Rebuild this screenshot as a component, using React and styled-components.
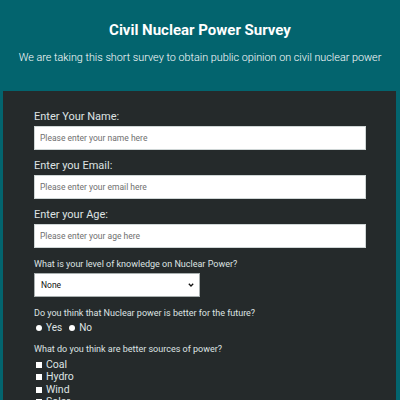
import React from 'react'
import styled, { createGlobalStyle } from 'styled-components'

const GlobalStyle = createGlobalStyle`
    body {
        margin: 0;
        background-color: #03646e;
        font-family: Roboto, "Liberation Sans", sans-serif;
    }
`

const Header = styled.header`
    text-align: center;
    color: #ffffff;
    padding: 21px 0 0 0;
    height: 70px;
`

const Title = styled.h1`
    margin: 0;
    font-size: 15px;
    font-weight: 700;
    line-height: 18px;
`

const Subtitle = styled.p`
    margin: 12px 0 0 0;
    font-size: 10.8px;
    font-weight: 300;
    line-height: 14px;
    white-space: nowrap;
`

const Panel = styled.main`
    margin: 0 4px 0 3px;
    background-color: #252a2b;
    padding: 19px 30px 0 31px;
    height: 309px;
    overflow: hidden;
`

const Field = styled.div`
    margin-bottom: ${p => p.$gap || 9}px;
`

const Label = styled.label`
    display: block;
    color: #dfe3e3;
    font-size: ${p => p.$size || 11}px;
    line-height: 14px;
    margin-bottom: ${p => p.$space || 2}px;
`

const TextInput = styled.input`
    display: block;
    width: 100%;
    height: 24px;
    box-sizing: border-box;
    border: 1px solid #cfd6d6;
    background: #ffffff;
    padding: 0 5px;
    font-family: Roboto, "Liberation Sans", sans-serif;
    font-size: 8.5px;
    color: #333;
    &::placeholder {
        color: #6f6f6f;
    }
`

const Select = styled.div`
    width: 166px;
    height: 24px;
    box-sizing: border-box;
    background: #ffffff;
    border: 1px solid #a9b0b0;
    display: flex;
    align-items: center;
    justify-content: space-between;
    padding: 0 5px 0 6px;
    font-size: 8.5px;
    color: #111;
`

const Options = styled.div`
    display: flex;
    align-items: center;
    gap: 5px;
`

const Choice = styled.div`
    display: flex;
    align-items: center;
    gap: 4px;
    color: #dfe3e3;
    font-size: ${p => p.$size || 10.5}px;
    line-height: 12.5px;
    padding-left: 2px;
`

const Dot = styled.span`
    width: 6px;
    height: 6px;
    border-radius: ${p => (p.$square ? '0' : '50%')};
    background: #ffffff;
    display: inline-block;
`

const List = styled.div`
    display: flex;
    flex-direction: column;
`

function App() {
    return (
        <>
            <GlobalStyle />
            <Header>
                <Title>Civil Nuclear Power Survey</Title>
                <Subtitle>We are taking this short survey to obtain public opinion on civil nuclear power</Subtitle>
            </Header>
            <Panel>
                <Field>
                    <Label>Enter Your Name:</Label>
                    <TextInput placeholder="Please enter your name here" />
                </Field>
                <Field>
                    <Label>Enter you Email:</Label>
                    <TextInput placeholder="Please enter your email here" />
                </Field>
                <Field>
                    <Label>Enter your Age:</Label>
                    <TextInput placeholder="Please enter your age here" />
                </Field>
                <Field>
                    <Label $size={9}>What is your level of knowledge on Nuclear Power?</Label>
                    <Select>
                        <span>None</span>
                        <svg width="6" height="4" viewBox="0 0 6 4">
                            <path d="M0.8 0.8 L3 3 L5.2 0.8" stroke="#111" strokeWidth="1.3" fill="none" />
                        </svg>
                    </Select>
                </Field>
                <Field $gap={7}>
                    <Label $size={9} $space={2}>Do you think that Nuclear power is better for the future?</Label>
                    <Options>
                        <Choice $size={10}><Dot />Yes</Choice>
                        <Choice $size={10}><Dot />No</Choice>
                    </Options>
                </Field>
                <Field>
                    <Label $size={9} $space={3}>What do you think are better sources of power?</Label>
                    <List>
                        {['Coal', 'Hydro', 'Wind', 'Solar'].map(s => (
                            <Choice key={s}><Dot $square />{s}</Choice>
                        ))}
                    </List>
                </Field>
            </Panel>
        </>
    )
}

export default App
